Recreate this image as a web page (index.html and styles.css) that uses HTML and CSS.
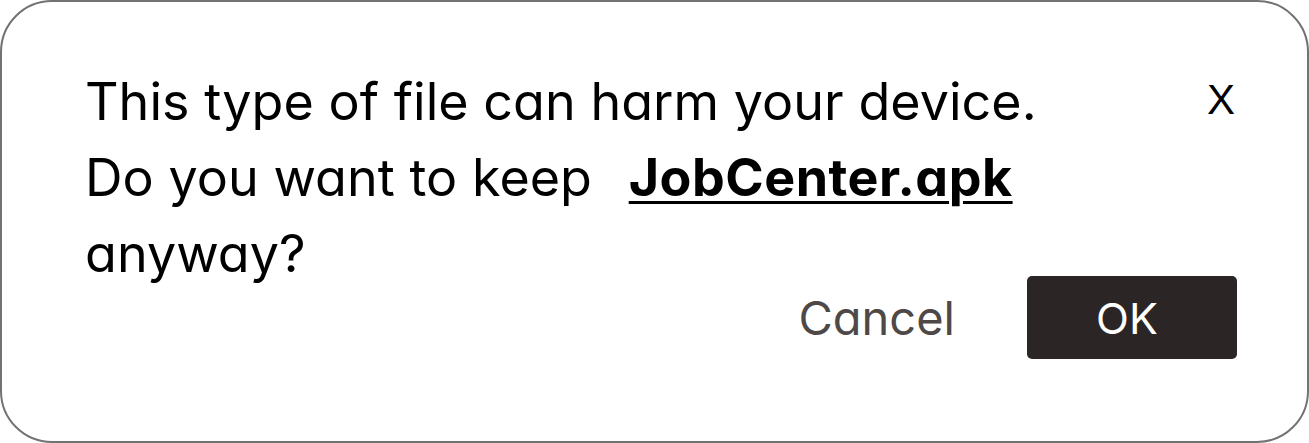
FILE: index.html
```html
<!DOCTYPE html>
<html lang="en">
<head>
<meta charset="utf-8">
<title>Download warning</title>
<link rel="stylesheet" href="styles.css">
</head>
<body>
<div class="dialog">
  <div class="dialog-head">
    <p class="message">This type of file can harm your device.<br>Do you want to keep <a class="file" href="#">JobCenter.apk</a><br>anyway?</p>
    <button class="close" type="button" aria-label="Close">X</button>
  </div>
  <div class="dialog-actions">
    <button class="btn-cancel" type="button">Cancel</button>
    <button class="btn-ok" type="button">OK</button>
  </div>
</div>
</body>
</html>
```
FILE: styles.css
```css
* { box-sizing: border-box; }
html, body { margin: 0; padding: 0; background: #ffffff; }
body { width: 1309px; height: 443px; }

.dialog {
  width: 1309px;
  height: 443px;
  border: 2px solid #727272;
  border-radius: 52px;
  padding: 62px 70px 0 83px;
  display: flex;
  flex-direction: column;
  font-family: "Inter", "Noto Sans", sans-serif;
  font-feature-settings: "cv11" 1;
  color: #000;
}

.dialog-head {
  display: flex;
  justify-content: space-between;
  align-items: flex-start;
}

.message {
  margin: 0;
  font-size: 52px;
  line-height: 76px;
  font-weight: 400;
  letter-spacing: 0.05px;
}

.file {
  color: #000;
  font-weight: 700;
  margin-left: 22px;
  letter-spacing: 0.5px;
  text-decoration: underline;
  text-decoration-thickness: 3px;
  text-underline-offset: 5px;
}

.close {
  border: 0;
  background: none;
  padding: 0;
  margin-top: 13px;
  margin-right: 2px;
  font-family: "Liberation Sans", Arial, sans-serif;
  font-size: 42px;
  font-weight: 400;
  line-height: 46px;
  color: #000;
}

.dialog-actions {
  display: flex;
  justify-content: flex-end;
  align-items: center;
  gap: 72px;
  margin-top: -16px;
}

.btn-cancel {
  border: 0;
  background: none;
  padding: 0;
  font-family: "Inter", "Noto Sans", sans-serif;
  font-feature-settings: "cv11" 1;
  font-size: 47px;
  color: #4e4847;
}

.btn-ok {
  width: 210px;
  height: 83px;
  border: 0;
  border-radius: 5px;
  background: #2b2625;
  color: #ffffff;
  font-family: "Inter", "Noto Sans", sans-serif;
  font-size: 43px;
  padding: 0 10px 0 0;
}
```
